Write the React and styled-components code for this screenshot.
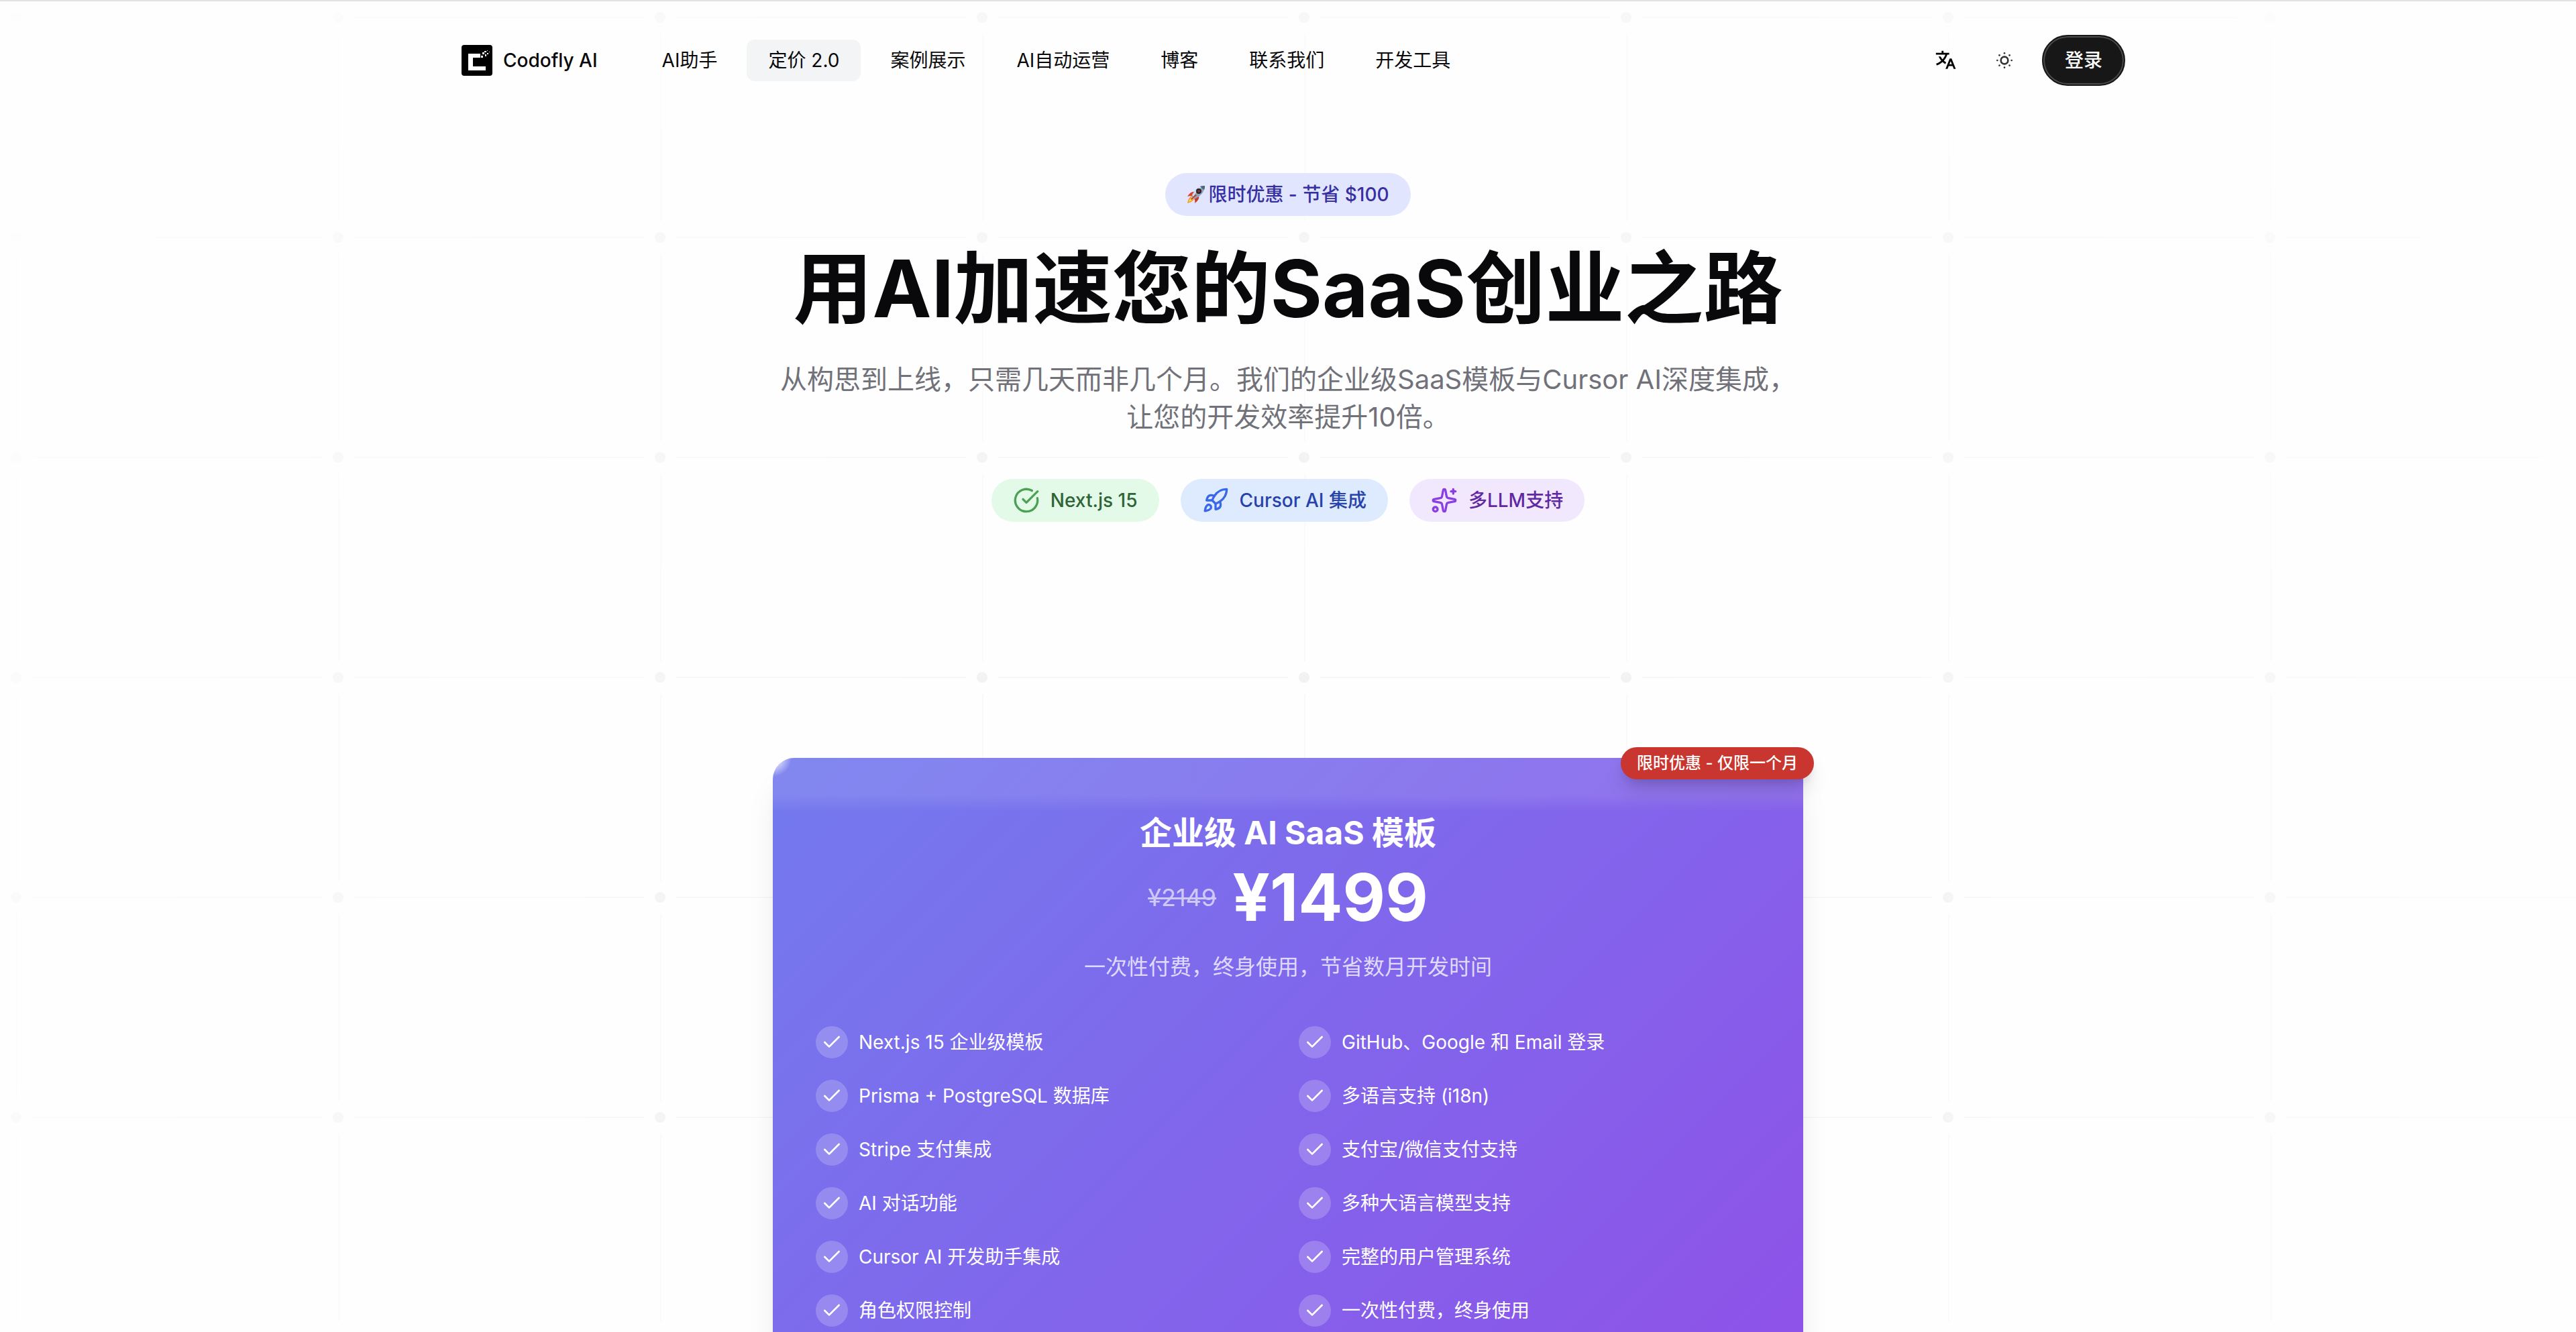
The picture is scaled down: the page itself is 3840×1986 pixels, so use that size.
import React from "react";
import styled, { createGlobalStyle } from "styled-components";
import { Check, CircleCheckBig, Rocket, Sparkles, SunDim } from "lucide-react";
import { RiTranslate2 } from "react-icons/ri";

const Global = createGlobalStyle`
  *, *::before, *::after { box-sizing: border-box; }
  html, body { margin: 0; background: #fefefe; }
  body {
    font-family: Inter, "Noto Sans CJK SC", sans-serif;
    font-size: 28px;
    line-height: 40px;
    color: #09090b;
    -webkit-font-smoothing: antialiased;
  }
  h1, h2, p, ul { margin: 0; padding: 0; }
  ul { list-style: none; }
  a { color: inherit; text-decoration: none; }
`;

const Page = styled.div`
  position: relative;
  height: 100vh;
  overflow: hidden;
  border-top: 2px solid #e2e2e2;
`;

const Backdrop = styled.svg`
  position: absolute;
  inset: 0;
  width: 100%;
  height: 100%;
`;

const Content = styled.div`
  position: relative;
`;

const Header = styled.header`
  display: flex;
  align-items: center;
  max-width: 2496px;
  margin: 0 auto;
  padding: 50px 0 0;
`;

const Brand = styled.a`
  display: flex;
  align-items: center;
  gap: 16px;
  padding-left: 16px;
  margin-right: 64px;
  font-weight: 500;
`;

const Nav = styled.nav`
  display: flex;
  gap: 12px;
  flex: 1;
`;

const NavLink = styled.a`
  padding: 11px 32px;
  border-radius: 12px;
  background: ${(p) => (p.$active ? "#f3f4f6" : "transparent")};
`;

const Actions = styled.div`
  display: flex;
  align-items: center;
  gap: 24px;
`;

const IconButton = styled.button`
  display: grid;
  place-items: center;
  width: 64px;
  height: 64px;
  border: 0;
  padding: 0;
  background: transparent;
  color: ${(p) => p.$color};
`;

const LoginButton = styled.button`
  height: 76px;
  padding: 0 32px;
  border: 2px solid #171717;
  border-radius: 38px;
  background: #171717;
  box-shadow: inset 0 0 0 2px #4a4a4a;
  color: #fff;
  font: inherit;
  font-weight: 500;
`;

const Hero = styled.section`
  display: flex;
  flex-direction: column;
  align-items: center;
  padding-top: 130px;
  text-align: center;
`;

const Pill = styled.span`
  display: inline-flex;
  align-items: center;
  gap: ${(p) => p.$gap};
  height: 64px;
  padding: 0 32px;
  border-radius: 32px;
  background: ${(p) => p.$bg};
  color: ${(p) => p.$color};
  font-weight: 500;
  svg { color: ${(p) => p.$icon}; }
`;

const Title = styled.h1`
  margin-top: 48px;
  font-size: 118px;
  line-height: 120px;
  font-weight: 700;
`;

const Lead = styled.p`
  max-width: 1536px;
  margin-top: 48px;
  font-size: 40px;
  line-height: 56px;
  color: #71717a;
`;

const Tags = styled.div`
  display: flex;
  gap: 32px;
  margin-top: 64px;
`;

const Card = styled.section`
  position: relative;
  max-width: 1536px;
  min-height: 1100px;
  margin: 352px auto 0;
  padding: 80px 64px 64px;
  border-radius: 32px;
  background:
    radial-gradient(circle at 0 0, rgba(255, 255, 255, 0.7) 10px, rgba(255, 255, 255, 0) 28px),
    linear-gradient(to bottom, rgba(255, 255, 255, 0.1) 56px, rgba(255, 255, 255, 0) 80px),
    linear-gradient(135deg, #737aee, #914fe8);
  box-shadow: 0 40px 50px -10px rgba(0, 0, 0, 0.1), 0 16px 20px -12px rgba(0, 0, 0, 0.1);
  color: #fff;
  text-align: center;
`;

const Ribbon = styled.span`
  position: absolute;
  top: -16px;
  right: -16px;
  padding: 4px 24px;
  border-radius: 24px;
  background: #c9362f;
  box-shadow: 0 20px 30px -6px rgba(0, 0, 0, 0.15), 0 8px 12px -4px rgba(0, 0, 0, 0.1);
  font-size: 24px;
  font-weight: 500;
`;

const PlanName = styled.h2`
  font-size: 48px;
  line-height: 64px;
  font-weight: 700;
`;

const PriceRow = styled.div`
  display: flex;
  align-items: center;
  justify-content: center;
  gap: 24px;
  margin-top: 16px;
`;

const OldPrice = styled.del`
  font-size: 36px;
  color: #cfc9fa;
`;

const Price = styled.strong`
  font-size: 98px;
  line-height: 96px;
  font-weight: 700;
`;

const Terms = styled.p`
  margin-top: 32px;
  font-size: 32px;
  line-height: 48px;
  color: #dedafc;
`;

const Features = styled.ul`
  display: grid;
  grid-template-columns: 1fr 1fr;
  gap: 32px;
  margin-top: 64px;
  text-align: left;
`;

const Feature = styled.li`
  display: flex;
  align-items: center;
  gap: 16px;
  height: 48px;
`;

const Tick = styled.span`
  display: grid;
  place-items: center;
  width: 48px;
  height: 48px;
  border-radius: 50%;
  background: rgba(255, 255, 255, 0.2);
`;

const navItems = ["AI助手", "定价 2.0", "案例展示", "AI自动运营", "博客", "联系我们", "开发工具"];

const features = [
  "Next.js 15 企业级模板",
  "GitHub、Google 和 Email 登录",
  "Prisma + PostgreSQL 数据库",
  "多语言支持 (i18n)",
  "Stripe 支付集成",
  "支付宝/微信支付支持",
  "AI 对话功能",
  "多种大语言模型支持",
  "Cursor AI 开发助手集成",
  "完整的用户管理系统",
  "角色权限控制",
  "一次性付费，终身使用",
];

function GridBackdrop() {
  return (
    <Backdrop aria-hidden="true">
      <defs>
        <pattern id="grid" x="24" y="24" width="480" height="328" patternUnits="userSpaceOnUse">
          <g fill="#000">
            {[[0, 0], [480, 0], [0, 328], [480, 328]].map(([x, y]) => (
              <circle key={`${x}-${y}`} cx={x} cy={y} r="8" opacity="0.06" />
            ))}
            <rect x="24" y="0" width="432" height="1" opacity="0.035" />
            <rect x="24" y="327" width="432" height="1" opacity="0.035" />
            <rect x="0" y="24" width="2" height="280" opacity="0.025" />
          </g>
        </pattern>
        <radialGradient id="fade" gradientUnits="userSpaceOnUse" cx="50%" cy="75%" r="75%">
          <stop offset="0" stopColor="#fff" />
          <stop offset="0.45" stopColor="#fff" stopOpacity="0.62" />
          <stop offset="0.72" stopColor="#fff" stopOpacity="0.4" />
          <stop offset="0.9" stopColor="#fff" stopOpacity="0.15" />
          <stop offset="1" stopColor="#fff" stopOpacity="0.05" />
        </radialGradient>
        <mask id="fadeMask" style={{ maskType: "alpha" }}>
          <rect width="100%" height="100%" fill="url(#fade)" />
        </mask>
      </defs>
      <rect width="100%" height="100%" fill="url(#grid)" mask="url(#fadeMask)" />
    </Backdrop>
  );
}

function Logo() {
  return (
    <svg width="46" height="46" viewBox="0 0 46 46" aria-hidden="true">
      <rect width="46" height="46" rx="4" fill="#000" />
      <path d="M10 13h18v6H17v13h19v6H10z" fill="#fff" />
      <path
        d="M29 16h3v3h-3zM31 11h3v3h-3zM34 9h3v2h-3zM35 14h2v3h-2zM38 8h1v1h-1zM38 12h2v2h-2zM41 10h1v1h-1z"
        fill="#fff"
      />
    </svg>
  );
}

function RocketEmoji() {
  return (
    <svg width="28" height="28" viewBox="0 0 28 28" aria-hidden="true">
      <path d="M6 17c-3 2-4 5-5 10 5-1 8-3 10-6z" fill="#f0a030" />
      <path d="M6 20c-2 2-2 3-3 5 2-1 4-2 5-3z" fill="#ffe56b" />
      <path d="M11 10c-4 0-6 1-10 7 3-1 5-1 8 0z" fill="#d9452b" />
      <path d="M18 16c1 4-1 7-6 11 1-4 0-6-2-8z" fill="#c93a26" />
      <path d="M27 1c-8 0-15 5-20 16l4 4C22 16 27 9 27 1z" fill="#8fa3b8" />
      <path d="M27 1c-8 0-14 5-19 14l2 2C15 9 20 4 27 1z" fill="#d3dde6" />
      <path d="M27 1c-3 0-5 0-7 1 2 2 4 4 6 5 1-2 1-4 1-6z" fill="#50657a" />
      <circle cx="18" cy="9" r="4" fill="#1b2430" />
      <circle cx="18" cy="9" r="2" fill="#8b2d2a" />
      <path d="M13 14l2 1-8 7-1-1z" fill="#c93a26" />
    </svg>
  );
}

export default function App() {
  return (
    <>
      <Global />
      <Page>
        <GridBackdrop />
        <Content>
          <Header>
            <Brand href="#">
              <Logo />
              Codofly AI
            </Brand>
            <Nav>
              {navItems.map((label, i) => (
                <NavLink key={label} href="#" $active={i === 1}>{label}</NavLink>
              ))}
            </Nav>
            <Actions>
              <IconButton type="button" aria-label="切换语言" $color="#000">
                <RiTranslate2 size={34} />
              </IconButton>
              <IconButton type="button" aria-label="切换主题" $color="#333">
                <SunDim size={32} />
              </IconButton>
              <LoginButton type="button">登录</LoginButton>
            </Actions>
          </Header>
          <main>
            <Hero>
              <Pill $bg="#e1e6fe" $color="#3730a3" $gap="4px">
                <RocketEmoji />
                限时优惠 - 节省 $100
              </Pill>
              <Title>用AI加速您的SaaS创业之路</Title>
              <Lead>从构思到上线，只需几天而非几个月。我们的企业级SaaS模板与Cursor AI深度集成，让您的开发效率提升10倍。</Lead>
              <Tags>
                <Pill $bg="#e3fae8" $color="#2f6436" $icon="#4ca154" $gap="16px">
                  <CircleCheckBig size={40} />
                  Next.js 15
                </Pill>
                <Pill $bg="#deeafe" $color="#2743ab" $icon="#3a67ea" $gap="16px">
                  <Rocket size={40} />
                  Cursor AI 集成
                </Pill>
                <Pill $bg="#f1e8fe" $color="#6228a3" $icon="#8b3ee2" $gap="16px">
                  <Sparkles size={40} />
                  多LLM支持
                </Pill>
              </Tags>
            </Hero>
            <Card>
              <Ribbon>限时优惠 - 仅限一个月</Ribbon>
              <PlanName>企业级 AI SaaS 模板</PlanName>
              <PriceRow>
                <OldPrice>¥2149</OldPrice>
                <Price>¥1499</Price>
              </PriceRow>
              <Terms>一次性付费，终身使用，节省数月开发时间</Terms>
              <Features>
                {features.map((text) => (
                  <Feature key={text}>
                    <Tick><Check size={32} /></Tick>
                    {text}
                  </Feature>
                ))}
              </Features>
            </Card>
          </main>
        </Content>
      </Page>
    </>
  );
}
